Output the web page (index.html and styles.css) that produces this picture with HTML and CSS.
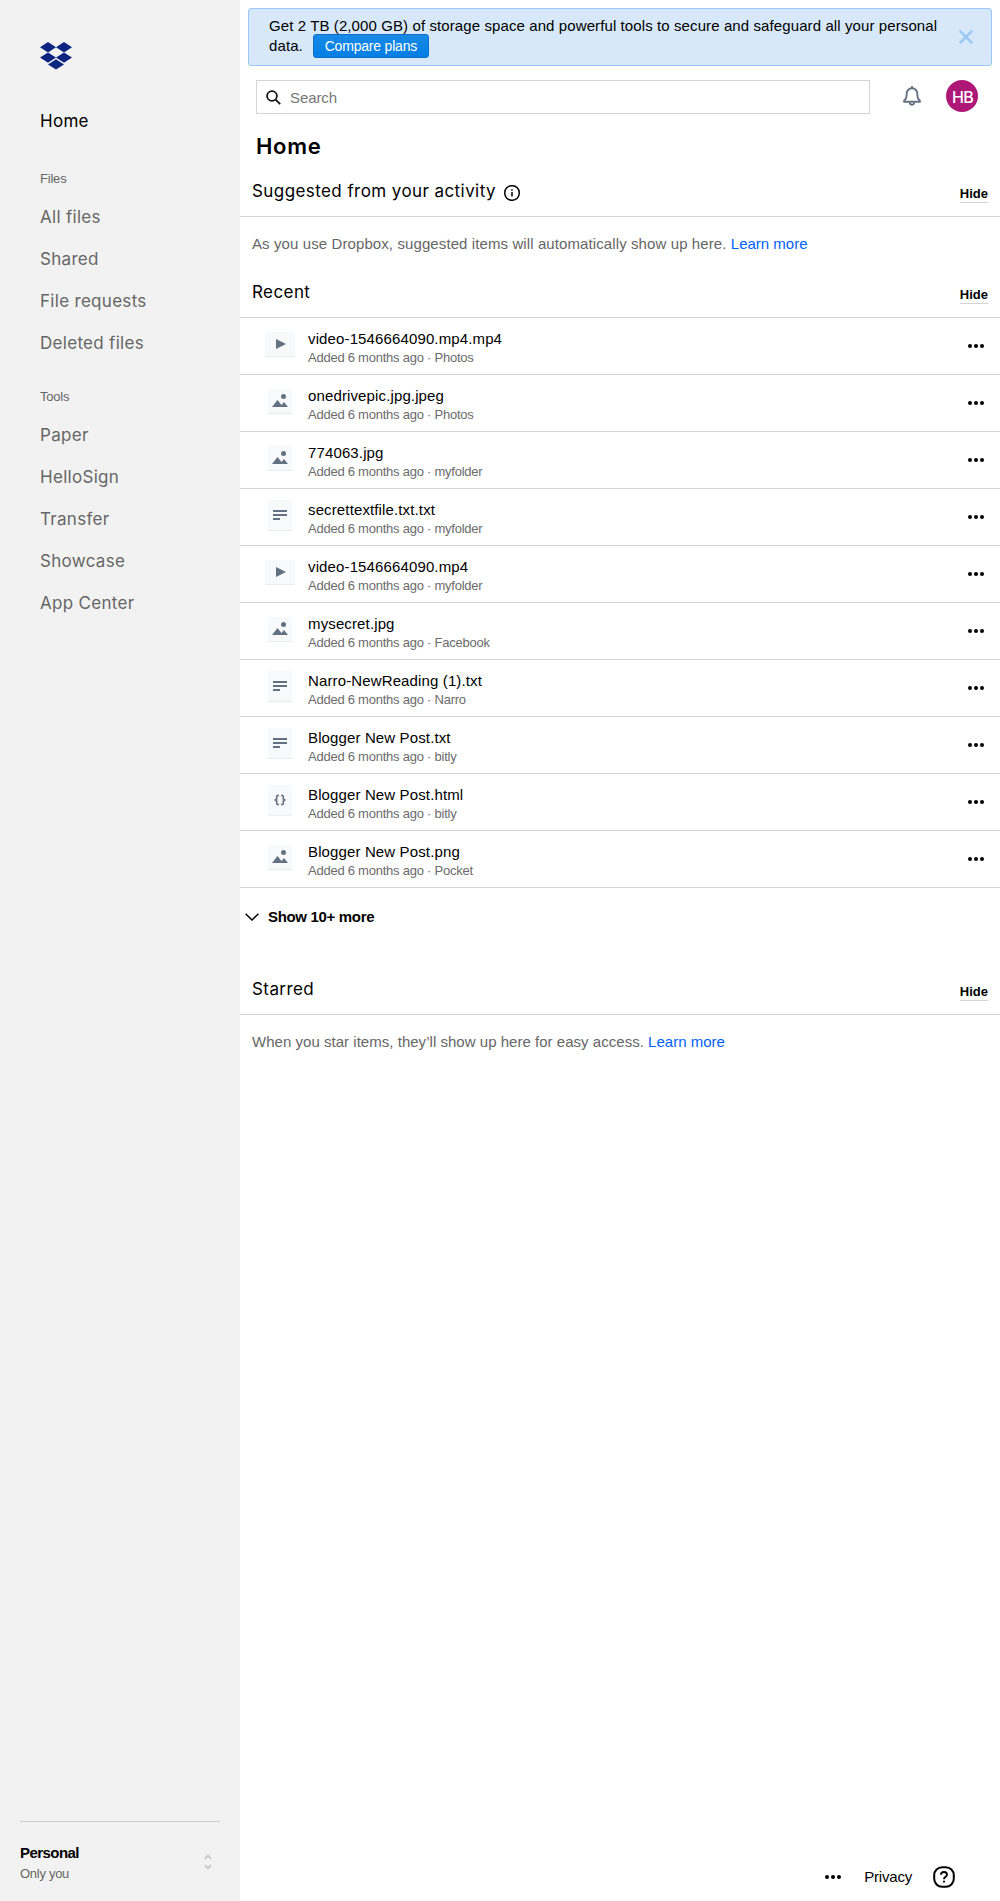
FILE: index.html
```html
<!DOCTYPE html>
<html lang="en">
<head>
<meta charset="utf-8">
<title>Home - Dropbox</title>
<link rel="stylesheet" href="styles.css">
</head>
<body>
<svg class="sprite" aria-hidden="true">
  <symbol id="i-video" viewBox="0 0 30 25"><rect y="1" width="30" height="24" rx="1.5" fill="#e9edf1"/><rect width="30" height="24" rx="1.5" fill="#f7f9fa"/><path d="M11 7v10l10-5z" fill="#637282"/></symbol>
  <symbol id="i-image" viewBox="0 0 24 25"><rect y="1" width="24" height="24" rx="1.5" fill="#e9edf1"/><rect width="24" height="24" rx="1.5" fill="#f7f9fa"/><circle cx="15.5" cy="7.5" r="2.5" fill="#637282"/><path d="M4 18l5.500-7 4 5 2.500-3 4 5z" fill="#637282"/></symbol>
  <symbol id="i-text" viewBox="0 0 24 31"><rect y="1" width="24" height="30" rx="1.5" fill="#e9edf1"/><rect width="24" height="30" rx="1.5" fill="#f7f9fa"/><path d="M5 10h14v2H5zM5 14h14v2H5zM5 18h7v2H5z" fill="#637282"/></symbol>
  <symbol id="i-code" viewBox="0 0 24 31"><rect y="1" width="24" height="30" rx="1.5" fill="#e9edf1"/><rect width="24" height="30" rx="1.5" fill="#f7f9fa"/><path d="M11 10.500H9.500Q8.700 10.500 8.700 11.500V14L7.300 15L8.700 16V18.500Q8.700 19.500 9.500 19.500H11M13 10.500h1.500q.8 0 .8 1V14l1.400 1-1.400 1v2.500q0 1-.8 1H13" fill="none" stroke="#637282" stroke-width="1.600"/></symbol>
  <symbol id="i-dots" viewBox="0 0 16 4"><circle cx="2" cy="2" r="2"/><circle cx="8" cy="2" r="2"/><circle cx="14" cy="2" r="2"/></symbol>
</svg>
<div class="page">
  <aside class="sidebar">
    <svg class="logo" viewBox="0 0 32 28" fill="#0d2481"><path d="M8 0l8 5.200-8 5.200-8-5.200zM24 0l8 5.200-8 5.200-8-5.200zM8 10.400l8 5.200-8 5.100-8-5.100zM24 10.400l8 5.200-8 5.100-8-5.100zM16 17.300l8 5.100-8 5.200-8-5.200z"/></svg>
    <nav class="nav">
      <a class="nav-item active">Home</a>
      <div class="nav-title first">Files</div>
      <a class="nav-item">All files</a>
      <a class="nav-item">Shared</a>
      <a class="nav-item">File requests</a>
      <a class="nav-item">Deleted files</a>
      <div class="nav-title">Tools</div>
      <a class="nav-item">Paper</a>
      <a class="nav-item">HelloSign</a>
      <a class="nav-item">Transfer</a>
      <a class="nav-item">Showcase</a>
      <a class="nav-item">App Center</a>
    </nav>
    <div class="account">
      <div>
        <div class="account-name">Personal</div>
        <div class="account-sub">Only you</div>
      </div>
      <svg class="sorter" viewBox="0 0 8 16" fill="none" stroke="#c9c9c9" stroke-width="2"><path d="M.9 4.800L4 1.600l3.100 3.200M.9 11.200L4 14.400l3.100-3.200"/></svg>
    </div>
  </aside>
  <main class="main">
    <div class="banner">
      <p class="banner-text">Get 2 TB (2,000 GB) of storage space and powerful tools to secure and safeguard all your personal<br>data.<a class="compare">Compare plans</a></p>
      <svg class="close" viewBox="0 0 14 14" stroke="#9cc8f5" stroke-width="2.600"><path d="M.8.8l12.400 12.400M13.200.8L.8 13.200"/></svg>
    </div>
    <header class="topbar">
      <div class="search">
        <svg class="search-icon" viewBox="0 0 15 15" fill="none" stroke="#111" stroke-width="1.800"><circle cx="6" cy="6" r="4.900"/><path d="M9.600 9.600l4.600 4.500"/></svg>
        <span>Search</span>
      </div>
      <svg class="bell" viewBox="0 0 18 20" fill="none" stroke="#637282" stroke-width="1.900"><path d="M9 0v2.500M1.200 15.800v-1.300Q3.700 12.500 3.700 9V7.500a5.300 5.300 0 0 1 10.600 0V9q0 3.500 2.500 5.500v1.300z"/><path d="M6.800 16.500a2.200 2.200 0 0 0 4.400 0"/></svg>
      <div class="avatar">HB</div>
    </header>
    <h1 class="title">Home</h1>

    <section class="section suggested">
      <div class="section-head">
        <h2>Suggested from your activity</h2>
        <svg class="info" viewBox="0 0 16 16" fill="none" stroke="#000" stroke-width="1.500"><rect x=".8" y=".8" width="14.400" height="14.400" rx="6.600"/><path d="M8 7v4.500M8 4.300v1.500"/></svg>
        <a class="hide">Hide</a>
      </div>
      <p class="empty">As you use Dropbox, suggested items will automatically show up here. <a>Learn more</a></p>
    </section>

    <section class="section recent">
      <div class="section-head"><h2>Recent</h2><a class="hide">Hide</a></div>
      <ul class="files">
        <li><svg class="thumb video"><use href="#i-video"/></svg><div class="file"><div class="name">video-1546664090.mp4.mp4</div><div class="meta">Added 6 months ago · Photos</div></div><svg class="dots"><use href="#i-dots"/></svg></li>
        <li><svg class="thumb"><use href="#i-image"/></svg><div class="file"><div class="name">onedrivepic.jpg.jpeg</div><div class="meta">Added 6 months ago · Photos</div></div><svg class="dots"><use href="#i-dots"/></svg></li>
        <li><svg class="thumb"><use href="#i-image"/></svg><div class="file"><div class="name">774063.jpg</div><div class="meta">Added 6 months ago · myfolder</div></div><svg class="dots"><use href="#i-dots"/></svg></li>
        <li><svg class="thumb doc"><use href="#i-text"/></svg><div class="file"><div class="name">secrettextfile.txt.txt</div><div class="meta">Added 6 months ago · myfolder</div></div><svg class="dots"><use href="#i-dots"/></svg></li>
        <li><svg class="thumb video"><use href="#i-video"/></svg><div class="file"><div class="name">video-1546664090.mp4</div><div class="meta">Added 6 months ago · myfolder</div></div><svg class="dots"><use href="#i-dots"/></svg></li>
        <li><svg class="thumb"><use href="#i-image"/></svg><div class="file"><div class="name">mysecret.jpg</div><div class="meta">Added 6 months ago · Facebook</div></div><svg class="dots"><use href="#i-dots"/></svg></li>
        <li><svg class="thumb doc"><use href="#i-text"/></svg><div class="file"><div class="name">Narro-NewReading (1).txt</div><div class="meta">Added 6 months ago · Narro</div></div><svg class="dots"><use href="#i-dots"/></svg></li>
        <li><svg class="thumb doc"><use href="#i-text"/></svg><div class="file"><div class="name">Blogger New Post.txt</div><div class="meta">Added 6 months ago · bitly</div></div><svg class="dots"><use href="#i-dots"/></svg></li>
        <li><svg class="thumb doc"><use href="#i-code"/></svg><div class="file"><div class="name">Blogger New Post.html</div><div class="meta">Added 6 months ago · bitly</div></div><svg class="dots"><use href="#i-dots"/></svg></li>
        <li><svg class="thumb"><use href="#i-image"/></svg><div class="file"><div class="name">Blogger New Post.png</div><div class="meta">Added 6 months ago · Pocket</div></div><svg class="dots"><use href="#i-dots"/></svg></li>
      </ul>
      <a class="more"><svg class="chevron" viewBox="0 0 14 8" fill="none" stroke="#000" stroke-width="1.500"><path d="M.6.700L7 7l6.400-6.300"/></svg><span>Show 10+ more</span></a>
    </section>

    <section class="section starred">
      <div class="section-head"><h2>Starred</h2><a class="hide">Hide</a></div>
      <p class="empty">When you star items, they’ll show up here for easy access. <a>Learn more</a></p>
    </section>

    <footer class="footer">
      <svg class="dots"><use href="#i-dots"/></svg>
      <a class="privacy">Privacy</a>
      <svg class="help" viewBox="0 0 22 22" fill="none" stroke="#000" stroke-width="2"><rect x="1.200" y="1.200" width="19.600" height="19.600" rx="8"/><path d="M8 8.800q0-2.800 3-2.800t3 2.600q0 1.500-1.500 2.200-1.500.7-1.500 2.400M11 14.800v1.800" stroke-width="1.900"/></svg>
    </footer>
  </main>
</div>
</body>
</html>
```
FILE: styles.css
```css
* { box-sizing: border-box; }
body {
  margin: 0;
  background: #fff;
  color: #000;
  font-family: "Liberation Sans", Arial, sans-serif;
  font-size: 15px;
}
h1, h2, p, ul { margin: 0; padding: 0; font-weight: 400; }
svg { display: block; flex: none; }
.sprite { position: absolute; width: 0; height: 0; }

.page { display: flex; height: 1901px; }

/* Sidebar */
.sidebar {
  display: flex;
  flex-direction: column;
  width: 240px;
  padding: 42px 20px 0;
  background: #f2f2f2;
}
.logo { width: 32px; height: 28px; margin-left: 20px; }
.nav {
  padding: 30px 20px 0;
  color: #666;
}
.nav-item {
  display: block;
  font: 400 17px/42px Inter, sans-serif;
  letter-spacing: .3px;
}
.nav-item.active { color: #000; }
.nav-title {
  height: 50px;
  padding-top: 15px;
  font-size: 13px;
  line-height: 36px;
  letter-spacing: -.2px;
}
.nav-title.first { margin-top: 4px; }
.account {
  display: flex;
  justify-content: space-between;
  height: 80px;
  margin-top: auto;
  padding: 20px 8px 0 0;
  border-top: 1px solid #ccc;
}
.account-name { font-weight: 700; line-height: 21px; letter-spacing: -.55px; }
.account-sub { font-size: 13px; line-height: 22px; letter-spacing: -.28px; color: #666; }
.sorter { width: 8px; height: 16px; margin-top: 12px; }

/* Main column */
.main { display: flex; flex-direction: column; flex: 1; }
.banner {
  display: flex;
  justify-content: space-between;
  height: 58px;
  margin: 8px 8px 0;
  padding: 7px 18px 0 20px;
  border: 1px solid #9cc8f5;
  border-radius: 3px;
  background: #d7e8fa;
}
.banner-text { line-height: 20px; letter-spacing: .1px; white-space: nowrap; }
.compare {
  display: inline-block;
  width: 116px;
  height: 24px;
  margin: -2px 0 0 10px;
  border: 1px solid #0d6fc7;
  border-radius: 3px;
  background: linear-gradient(#1a8ae6, #007ee5);
  color: #fff;
  font-size: 14px;
  line-height: 23px;
  letter-spacing: -.2px;
  text-align: center;
  vertical-align: top;
}
.close { width: 14px; height: 14px; margin-top: 14px; }
.topbar { display: flex; height: 34px; margin: 14px 22px 0 16px; }
.search {
  display: flex;
  width: 614px;
  padding-left: 9px;
  gap: 9px;
  border: 1px solid #d4d4d4;
  color: #777;
  line-height: 33px;
  letter-spacing: -.1px;
}
.search-icon { width: 15px; height: 15px; margin-top: 9px; }
.bell { width: 18px; height: 20px; margin: 6px 25px 0 33px; }
.avatar {
  width: 32px;
  height: 32px;
  border-radius: 50%;
  background: #ad1877;
  color: #fff;
  font: 500 16px/34px Inter, sans-serif;
  letter-spacing: -.7px;
  padding-left: 1px;
  text-align: center;
}
.title {
  height: 58px;
  padding-left: 16px;
  font: 600 22px/64px Inter, sans-serif;
  letter-spacing: .7px;
}

.section-head {
  display: flex;
  height: 45px;
  padding: 0 12px;
  border-bottom: 1px solid #d4d4d4;
}
.section-head h2 { font: 400 17px/38px Inter, sans-serif; letter-spacing: .42px; }
.info { width: 16px; height: 16px; margin: 13px 0 0 8px; }
.hide {
  align-self: flex-start;
  height: 20px;
  margin: 11px 0 0 auto;
  border-bottom: 1px solid #d4d4d4;
  font-size: 13px;
  font-weight: 700;
  line-height: 22px;
}
.empty { height: 56px; padding-left: 12px; color: #666; line-height: 54px; letter-spacing: .1px; }
.starred .empty { letter-spacing: .03px; }
.empty a { color: #0061fe; letter-spacing: 0; }
.files { list-style: none; }
.files li {
  display: flex;
  align-items: flex-start;
  height: 57px;
  padding: 0 16px 0 28px;
  border-bottom: 1px solid #d4d4d4;
}
.thumb { width: 24px; height: 25px; margin-top: 14px; }
.thumb.video { width: 30px; margin: 14px -3px 0; }
.thumb.doc { height: 31px; margin-top: 11px; }
.file { flex: 1; margin: 11px 0 0 16px; }
.name { line-height: 20px; letter-spacing: .13px; }
.meta { font-size: 13px; line-height: 18px; letter-spacing: -.24px; color: #6b6b6b; }
.files .dots { margin-top: 26px; }
.dots { width: 16px; height: 4px; }
.more {
  display: flex;
  height: 82px;
  padding: 18px 0 0 5px;
  gap: 9px;
  font-weight: 700;
  line-height: 22px;
  letter-spacing: -.33px;
}
.chevron { width: 14px; height: 8px; margin-top: 7px; }

.footer { display: flex; margin: auto 45px 13px auto; }
.footer .dots { margin-top: 9px; }
.privacy { margin: 0 21px 0 23px; line-height: 22px; letter-spacing: -.2px; }
.help { width: 22px; height: 22px; }
```
